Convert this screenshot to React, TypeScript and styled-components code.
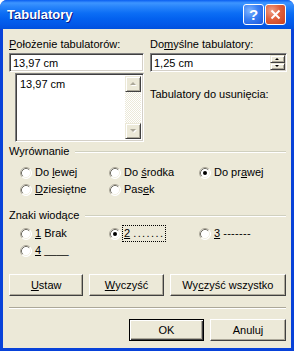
import styled, { createGlobalStyle } from "styled-components";

const GlobalStyle = createGlobalStyle`
  html, body { margin: 0; padding: 0; background: #ffffff; }
  body {
    font-family: Tahoma, "Liberation Sans", Arial, sans-serif;
    font-size: 11px;
    color: #000;
  }
  * { box-sizing: border-box; }
`;

const Window = styled.div`
  width: 294px;
  height: 351px;
  display: flex;
  flex-direction: column;
  background: #0842d9;
  border-radius: 7px 7px 0 0;
  overflow: hidden;
`;

const TitleBar = styled.div`
  height: 29px;
  display: flex;
  align-items: center;
  padding: 0 8px 0 7px;
  background: linear-gradient(
    to bottom,
    #0a5ef0 0%,
    #3d95ff 10%,
    #2a86fb 22%,
    #0c6ef5 45%,
    #0361ef 65%,
    #0258e8 85%,
    #0050dd 100%
  );
`;

const Title = styled.div`
  flex: 1;
  color: #fff;
  font-family: "Liberation Sans", Arial, sans-serif;
  font-weight: 700;
  font-size: 13px;
  text-shadow: 1px 1px 0 #0a1883;
`;

const TitleButtons = styled.div`
  display: flex;
  gap: 1px;
`;

const CapButton = styled.div<{ $kind: "help" | "close" }>`
  width: 21px;
  height: 21px;
  border: 1px solid #fff;
  border-radius: 3px;
  display: flex;
  align-items: center;
  justify-content: center;
  color: #fff;
  font-family: "Liberation Sans", Arial, sans-serif;
  font-weight: 700;
  font-size: 15px;
  background: ${(p) =>
    p.$kind === "close"
      ? "radial-gradient(circle at 30% 30%, #f0a088 0%, #e0603c 45%, #c8401e 100%)"
      : "radial-gradient(circle at 30% 30%, #7fb4ff 0%, #3a80f3 45%, #1c55dc 100%)"};
`;

const Frame = styled.div`
  flex: 1;
  margin: 0 3px 3px;
  background: #ece9d8;
  padding: 9px 5px 0 6px;
  display: flex;
  flex-direction: column;
`;

const TopGrid = styled.div`
  display: grid;
  grid-template-columns: 135px 137px;
  column-gap: 6px;
`;

const Column = styled.div`
  display: flex;
  flex-direction: column;
`;

const Label = styled.div<{ $gap?: number }>`
  line-height: 13px;
  height: 13px;
  margin-bottom: 2px;
  margin-top: ${(p) => p.$gap ?? 0}px;
  white-space: nowrap;
`;

const Key = styled.span`
  text-decoration: underline;
`;

const TextBox = styled.div`
  height: 19px;
  background: #fff;
  border: 1px solid;
  border-color: #808080 #ffffff #ffffff #808080;
  box-shadow: inset 1px 1px 0 #404040, inset -1px -1px 0 #d4d0c8;
  padding: 0 3px;
  display: flex;
  align-items: center;
`;

const TextValue = styled.div`
  flex: 1;
`;

const ListBox = styled.div`
  margin: 1px 0 0 6px;
  height: 69px;
  background: #fff;
  border: 1px solid;
  border-color: #808080 #ffffff #ffffff #808080;
  box-shadow: inset 1px 1px 0 #404040, inset -1px -1px 0 #d4d0c8;
  padding: 2px;
  display: flex;
`;

const ListItems = styled.div`
  flex: 1;
  padding: 2px 0 0 2px;
  line-height: 13px;
`;

const ScrollBar = styled.div`
  width: 16px;
  display: flex;
  flex-direction: column;
  justify-content: space-between;
  background-color: #fbfaf6;
  background-image: repeating-conic-gradient(#ece9d8 0 25%, #ffffff 0 50%);
  background-size: 2px 2px;
`;

const BevelButton = styled.div<{ $h: number }>`
  height: ${(p) => p.$h}px;
  background: #ece9d8;
  border: 1px solid;
  border-color: #ece9d8 #404040 #404040 #ece9d8;
  box-shadow: inset 1px 1px 0 #fff, inset -1px -1px 0 #aca899;
  display: flex;
  align-items: center;
  justify-content: center;
`;

const SpinColumn = styled.div`
  width: 15px;
  height: 15px;
  display: flex;
  flex-direction: column;
  margin-right: -2px;
`;

const GroupHeader = styled.div<{ $top: number }>`
  display: flex;
  align-items: center;
  gap: 6px;
  height: 13px;
  line-height: 13px;
  margin-top: ${(p) => p.$top}px;
`;

const GroupLine = styled.div`
  flex: 1;
  height: 2px;
  border-top: 1px solid #d0d0bf;
  border-bottom: 1px solid #fff;
`;

const RadioGrid = styled.div<{ $top: number }>`
  display: grid;
  grid-template-columns: 89px 90px 1fr;
  grid-auto-rows: 17px;
  padding-left: 11px;
  margin-top: ${(p) => p.$top}px;
`;

const RadioItem = styled.div`
  display: flex;
  align-items: center;
  gap: 2px;
  white-space: nowrap;
`;

const RadioText = styled.span<{ $focus?: boolean }>`
  padding: 1px 1px 2px;
  line-height: 12px;
  outline: ${(p) => (p.$focus ? "1px dotted #000" : "none")};
`;

const Leader = styled.span<{ $spacing: number }>`
  letter-spacing: ${(p) => p.$spacing}px;
`;

const ButtonRow = styled.div<{ $top: number; $justify: string }>`
  display: flex;
  justify-content: ${(p) => p.$justify};
  gap: 6px;
  margin-top: ${(p) => p.$top}px;
`;

const PushButton = styled.div<{ $w: number; $default?: boolean }>`
  width: ${(p) => p.$w}px;
  height: 22px;
  display: flex;
  align-items: center;
  justify-content: center;
  background: #ece9d8;
  border: 1px solid;
  border-color: ${(p) =>
    p.$default ? "#000" : "#ffffff #404040 #404040 #ffffff"};
  box-shadow: ${(p) =>
    p.$default
      ? "inset 1px 1px 0 #fff, inset -1px -1px 0 #404040, inset -2px -2px 0 #aca899"
      : "inset -1px -1px 0 #aca899"};
`;

const Separator = styled.div`
  margin-top: 11px;
  height: 2px;
  border-top: 1px solid #aca899;
  border-bottom: 1px solid #fff;
`;

const Radio = ({ checked }: { checked?: boolean }) => (
  <svg width="12" height="12" viewBox="0 0 12 12">
    <circle cx="6" cy="6" r="5.5" fill="#fff" />
    <path d="M2.11 9.89 A5.5 5.5 0 0 1 9.89 2.11" fill="none" stroke="#aca899" />
    <path d="M9.89 2.11 A5.5 5.5 0 0 1 2.11 9.89" fill="none" stroke="#fff" />
    <path d="M2.82 9.18 A4.5 4.5 0 0 1 9.18 2.82" fill="none" stroke="#716f64" />
    <path d="M9.18 2.82 A4.5 4.5 0 0 1 2.82 9.18" fill="none" stroke="#f1efe2" />
    {checked && <circle cx="6" cy="6" r="2" fill="#000" />}
  </svg>
);

const Arrow = ({ up, color, size }: { up?: boolean; color: string; size: number }) => (
  <svg width={size * 2 + 1} height={size + 1} viewBox={`0 0 ${size * 2 + 1} ${size + 1}`}>
    {color === "#aca899" && (
      <polygon
        points={
          up
            ? `${size + 1},1 ${size * 2 + 1},${size + 1} 1,${size + 1}`
            : `1,1 ${size * 2 + 1},1 ${size + 1},${size + 1}`
        }
        fill="#fff"
      />
    )}
    <polygon
      points={
        up
          ? `${size},0 ${size * 2},${size} 0,${size}`
          : `0,0 ${size * 2},0 ${size},${size}`
      }
      fill={color}
    />
  </svg>
);

const Close = () => (
  <svg width="11" height="11" viewBox="0 0 11 11">
    <path d="M1.5 1.5 L9.5 9.5 M9.5 1.5 L1.5 9.5" stroke="#fff" strokeWidth="2" />
  </svg>
);

const align = [
  [<>Do <Key>l</Key>ewej</>, false],
  [<>Do <Key>ś</Key>rodka</>, false],
  [<>Do pr<Key>a</Key>wej</>, true],
  [<><Key>D</Key>ziesiętne</>, false],
  [<>Pas<Key>e</Key>k</>, false],
] as const;

const leaders = [
  [<><Key>1</Key> Brak</>, false],
  [<><Key>2</Key> <Leader $spacing={1.4}>.......</Leader></>, true],
  [<><Key>3</Key> <Leader $spacing={0.3}>-------</Leader></>, false],
  [<><Key>4</Key> <Leader $spacing={0}>____</Leader></>, false],
] as const;

export default function App() {
  return (
    <>
      <GlobalStyle />
      <Window>
        <TitleBar>
          <Title>Tabulatory</Title>
          <TitleButtons>
            <CapButton $kind="help">?</CapButton>
            <CapButton $kind="close">
              <Close />
            </CapButton>
          </TitleButtons>
        </TitleBar>
        <Frame>
          <TopGrid>
            <Column>
              <Label>
                <Key>P</Key>ołożenie tabulatorów:
              </Label>
              <TextBox>
                <TextValue>13,97 cm</TextValue>
              </TextBox>
              <ListBox>
                <ListItems>13,97 cm</ListItems>
                <ScrollBar>
                  <BevelButton $h={16}>
                    <Arrow up color="#aca899" size={3} />
                  </BevelButton>
                  <BevelButton $h={16}>
                    <Arrow color="#aca899" size={3} />
                  </BevelButton>
                </ScrollBar>
              </ListBox>
            </Column>
            <Column>
              <Label>
                Do<Key>m</Key>yślne tabulatory:
              </Label>
              <TextBox>
                <TextValue>1,25 cm</TextValue>
                <SpinColumn>
                  <BevelButton $h={8}>
                    <Arrow up color="#000" size={2} />
                  </BevelButton>
                  <BevelButton $h={7}>
                    <Arrow color="#000" size={2} />
                  </BevelButton>
                </SpinColumn>
              </TextBox>
              <Label $gap={16}>Tabulatory do usunięcia:</Label>
            </Column>
          </TopGrid>

          <GroupHeader $top={3}>
            <span>Wyrównanie</span>
            <GroupLine />
          </GroupHeader>
          <RadioGrid $top={6}>
            {align.map(([text, checked], i) => (
              <RadioItem key={i}>
                <Radio checked={checked} />
                <RadioText>{text}</RadioText>
              </RadioItem>
            ))}
          </RadioGrid>

          <GroupHeader $top={11}>
            <span>Znaki wiodące</span>
            <GroupLine />
          </GroupHeader>
          <RadioGrid $top={3}>
            {leaders.map(([text, checked], i) => (
              <RadioItem key={i}>
                <Radio checked={checked} />
                <RadioText $focus={checked}>{text}</RadioText>
              </RadioItem>
            ))}
          </RadioGrid>

          <ButtonRow $top={15} $justify="space-between">
            <PushButton $w={76}>
              <Key>U</Key>staw
            </PushButton>
            <PushButton $w={76}>
              <Key>W</Key>yczyść
            </PushButton>
            <PushButton $w={119}>
              Wy<Key>c</Key>zyść wszystko
            </PushButton>
          </ButtonRow>
          <Separator />
          <ButtonRow $top={10} $justify="flex-end">
            <PushButton $w={75} $default>
              OK
            </PushButton>
            <PushButton $w={76}>Anuluj</PushButton>
          </ButtonRow>
        </Frame>
      </Window>
    </>
  );
}
